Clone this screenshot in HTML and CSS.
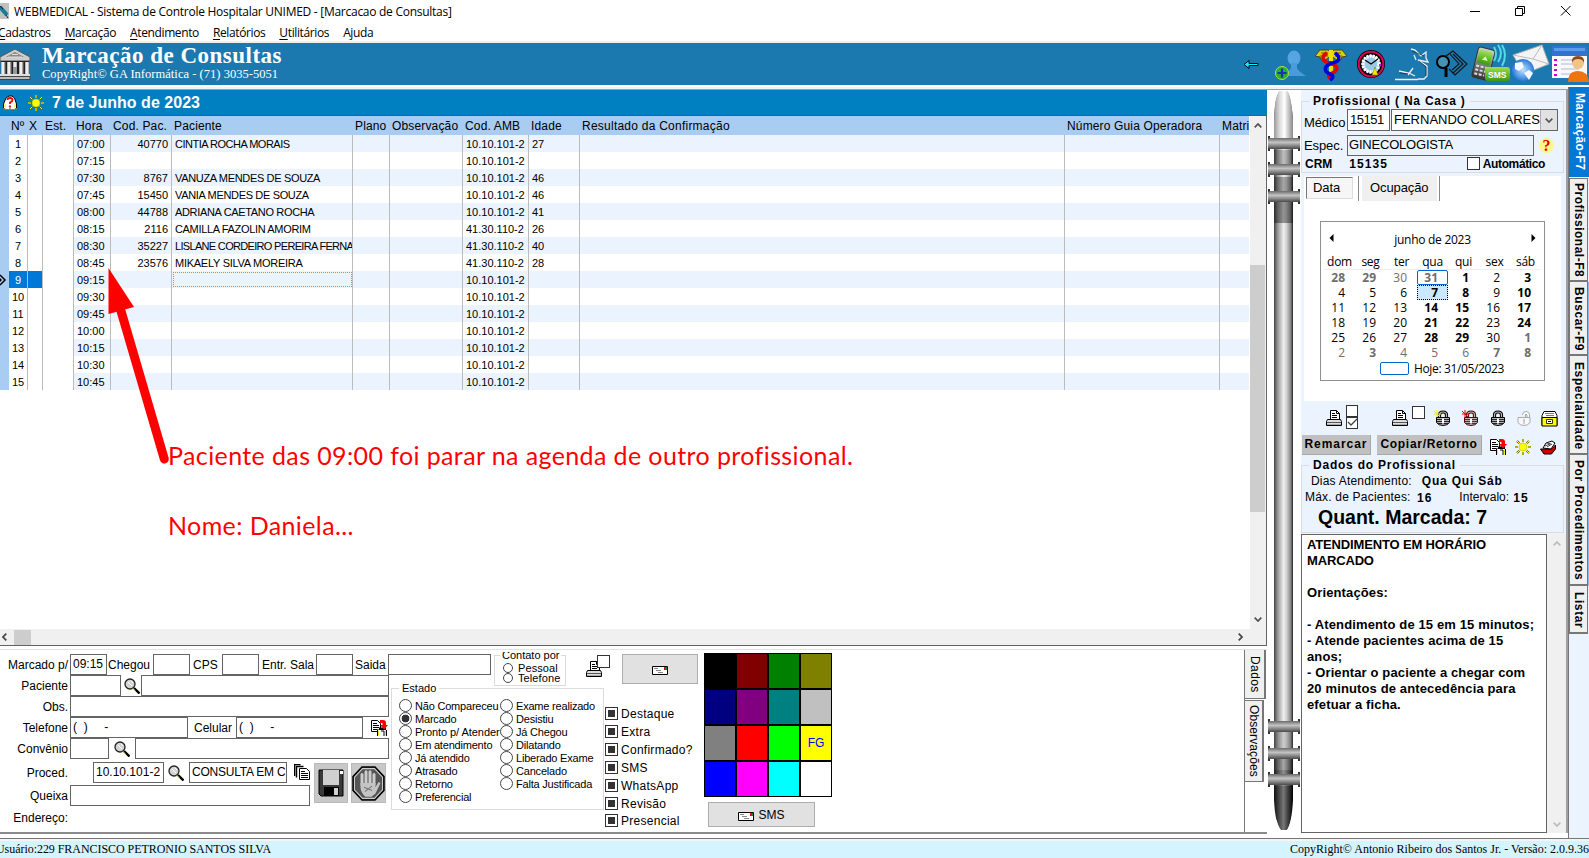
FILE: index.html
```html
<!DOCTYPE html>
<html lang="pt-BR">
<head>
<meta charset="utf-8">
<title>WEBMEDICAL</title>
<link rel="stylesheet" href="styles.css">
</head>
<body>
<svg width="0" height="0" class="defs" aria-hidden="true">
<defs>
<linearGradient id="tube"><stop offset="0" stop-color="#444"/><stop offset=".2" stop-color="#999"/><stop offset=".5" stop-color="#eee"/><stop offset=".65" stop-color="#d4d4d4"/><stop offset=".88" stop-color="#888"/><stop offset="1" stop-color="#222"/></linearGradient>
<linearGradient id="tubeTop"><stop offset="0" stop-color="#999"/><stop offset=".3" stop-color="#ddd"/><stop offset=".55" stop-color="#fff"/><stop offset="1" stop-color="#888"/></linearGradient>
<linearGradient id="tubeDark"><stop offset="0" stop-color="#111"/><stop offset=".5" stop-color="#777"/><stop offset="1" stop-color="#000"/></linearGradient>
<linearGradient id="ringFill" x2="0" y2="1"><stop offset="0" stop-color="#6a6a6a"/><stop offset=".4" stop-color="#c4c4c4"/><stop offset="1" stop-color="#4a4a4a"/></linearGradient>
<linearGradient id="phone" x2="0" y2="1"><stop offset="0" stop-color="#c8d8c8"/><stop offset="1" stop-color="#333"/></linearGradient>
<linearGradient id="green" x2="0" y2="1"><stop offset="0" stop-color="#9ae04a"/><stop offset="1" stop-color="#3a9a10"/></linearGradient>
<radialGradient id="globeFill"><stop offset="0" stop-color="#bfe4ff"/><stop offset="1" stop-color="#2a7ad8"/></radialGradient>
<symbol id="ring" viewBox="0 0 34 16"><path d="M2 0v15M32 0v15" stroke="#333" stroke-width="2"/><rect x="1" y="2" width="32" height="11" rx="2" fill="url(#ringFill)"/></symbol>
<symbol id="printer" viewBox="0 0 16 18"><path d="M4.500 10.500V1.500h6l3 3v6" fill="#fff" stroke="#000"/><path d="M10.500 1.500v3h3M6 4.500h3M6 6.500h5M6 8.500h5" stroke="#000" fill="none"/><path d="M1.500 10.500h13l1 2v4h-15v-4z" fill="#ddd" stroke="#000"/><path d="M1 13.500h14" stroke="#555"/><path d="M1 15.500h14" stroke="#aaa"/></symbol>
<symbol id="lens" viewBox="0 0 16 16"><circle cx="6" cy="6" r="5" fill="#d4d4d4" stroke="#222" stroke-width="1.300"/><path d="M4 4l4 4M7 3l2 2" stroke="#fff"/><path d="M10 10l5.500 5.500" stroke="#000" stroke-width="2.400"/><path d="M9 10.500l2 2" stroke="#dd0"/></symbol>
<symbol id="docs" viewBox="0 0 17 17"><path d="M.5 1.500h6l3 3v8h-9z" fill="#fff" stroke="#000"/><path d="M2 4.500h4M2 6.500h6M2 8.500h6M2 10.500h6" stroke="#000"/><path d="M6.500 10.500h9v6h-9z" fill="#fff"/><path d="M6.500 11v6M15.500 11v6M10 12h3v5" stroke="#000" fill="none"/><path d="M7.500 11.500v5M14.500 11.500v5" stroke="#ee0"/><path d="M8 8.500h7v2.500H8z" fill="#000"/><path d="M9 1h3q3 0 3 3v2h2l-4 4.500L9 6h2.500V4H9z" fill="#f00"/></symbol>
<symbol id="lock" viewBox="0 0 14 16"><path d="M3.500 7V5Q3.500 2 7 2t3.500 3v2" fill="none" stroke="currentColor" stroke-width="3.200"/><path d="M3.500 8V5Q3.500 2 7 2t3.500 3v3" fill="none" stroke="#bbb" stroke-width="1.200"/><path d="M.500 7.500h13v5q-2 3-6.500 3t-6.500-3z" fill="#b4b4b4" stroke="currentColor"/><path d="M1 9.500h12M1 11.500h12M2 13.500h10" stroke="currentColor" opacity=".8"/><path d="M6 8.500h2v5H6z" fill="#fff"/></symbol>
<symbol id="sun" viewBox="0 0 16 16"><path d="M8 0v3M8 13v3M0 8h3M13 8h3M2 2l2.300 2.300M11.700 11.700L14 14M2 14l2.300-2.300M11.700 4.300L14 2" stroke="#660" stroke-width="2"/><path d="M8 0v3M8 13v3M0 8h3M13 8h3M2 2l2.300 2.300M11.700 11.700L14 14M2 14l2.300-2.300M11.700 4.300L14 2" stroke="#ff0"/><circle cx="8" cy="8" r="4" fill="#ff0" stroke="#aa0" stroke-width=".5"/></symbol>
<symbol id="mail" viewBox="0 0 16 9"><path d="M.5.500h15v8H.5z" fill="#fff" stroke="#000"/><path d="M2 2.500h4M4 4.500h5M6 6.500h5" stroke="#888"/><path d="M12 1h3v3h-3z" fill="#e00"/><path d="M13.500 1H15v3h-1.500z" fill="#090"/></symbol>
<symbol id="up" viewBox="0 0 8 5"><path d="M.7 4.300L4 1l3.300 3.300" fill="none" stroke="currentColor" stroke-width="1.700"/></symbol>
</defs>
</svg>
<div class="app">
<header class="titlebar">
  <svg class="appicon" width="9" height="16" viewBox="0 0 9 16"><path d="M0 0h9v16H0z" fill="#c0c0c0"/><path d="M0 4l7 8" stroke="#167d95" stroke-width="4"/><path d="M0 3l3 3M6 12l2 3" stroke="#123"/></svg>
  <span class="title">WEBMEDICAL - Sistema de Controle Hospitalar UNIMED - [Marcacao de Consultas]</span>
  <svg class="winbtns" width="105" height="12" viewBox="0 0 105 12"><path d="M0 6.500h10M45.500 3.500h7v7h-7zM47.500 3.500v-2h7v7h-2M91 1l9.500 9.500M100.500 1L91 10.500" fill="none" stroke="#000"/></svg>
</header>
<nav class="menu"><span class="m1"><u>C</u>adastros</span><span><u>M</u>arcação</span><span><u>A</u>tendimento</span><span><u>R</u>elatórios</span><span><u>U</u>tilitários</span><span>A<u>j</u>uda</span></nav>
<div class="banner">
  <svg class="temple" width="32" height="32" viewBox="0 0 32 32"><path d="M0 9L15 1l15 8v4H0z" fill="#ccc" stroke="#555"/><path d="M6 9l9-5 9 5z" fill="#888"/><path d="M8 9h14M12 6.500h6" stroke="#ddd"/><path d="M1 13h28v15H1z" fill="#222"/><path d="M3 14v13M9 14v13M15 14v5M21 14v13M27 14v13" stroke="#eee" stroke-width="3.500"/><path d="M5 14v13M11 14v13M23 14v13" stroke="#888"/><path d="M13 19h4v8h-4z" fill="#999"/><path d="M0 26h30v2H0z" fill="#ddd"/><path d="M-1 28.500h31v3H-1z" fill="#bbb" stroke="#444"/></svg>
  <div class="brand"><b>Marcação de Consultas</b><small>CopyRight© GA Informática - (71) 3035-5051</small></div>
  <svg class="tools" width="346" height="42" viewBox="1243 43 346 42">
    <path d="M1244 64.500l5-4v3h9v2h-9v3z" fill="#00f0ff" stroke="#000"/>
    <ellipse cx="1294" cy="58" rx="6.500" ry="7.500" fill="#55a5e2"/><path d="M1291 63h6v5q1 3 9 8h-25q8-4 10-8z" fill="#4a9bdb"/><circle cx="1282" cy="73" r="6.500" fill="#2aad35" stroke="#b0df40"/><path d="M1277.500 73h9M1282 68.500v9" stroke="#1835ae" stroke-width="2.200"/>
    <path d="M1315 56l5-6h8l3 2 3-2h8l5 6-5 1-1 3h-4l-6-4-6 4h-4l-1-3z" fill="#dcd000" stroke="#443"/><path d="M1321 53h7M1334 53h7M1320 56h8M1335 56h7" stroke="#665c00"/><path d="M1331 50v29" stroke="#eede00" stroke-width="4"/><path d="M1327 53c-7 4-4 9 3 10 9 3 9 7 1 11-4 2-2 4 1 5" fill="none" stroke="#e80000" stroke-width="3.800"/><path d="M1335 53c6 4 5 9-3 10-8 3-9 8-2 11 5 2 2 5 0 6" fill="none" stroke="#0000d8" stroke-width="3.600"/>
    <circle cx="1371" cy="64" r="11.500" fill="#d9ecf8" stroke="#000" stroke-width="5"/><circle cx="1371" cy="64" r="12.300" fill="none" stroke="#e00050" stroke-width="2"/><circle cx="1371" cy="64" r="8" fill="#9cc8e6" stroke="#fff" stroke-width="3.500" stroke-dasharray="2 1"/><path d="M1365 60l6 4 7-5" fill="none" stroke="#000" stroke-width="1.200"/><path d="M1375 67l3 8h-6z" fill="#ee0" stroke="#660" stroke-width=".5"/><path d="M1379 64h2v2h-2z" fill="#e0e"/>
    <path d="M1411 49l4 1 6 6 5-4v6l2 4-10-2 9 6v10l-3 3h-6M1395 79.500h23M1399 71l10 2 6 3M1408 75l5-7M1416 60l-2-5" fill="none" stroke="#eee" stroke-width="1.300"/><path d="M1412 51l12 5M1419 61l7 6v9M1400 73l8 1" fill="none" stroke="#222" stroke-width=".7"/>
    <circle cx="1443" cy="62" r="6" fill="#4592b7" stroke="#000" stroke-width="2"/><path d="M1446 68v9" stroke="#000" stroke-width="3"/><path d="M1446 56l7-5 14 13-12 11-6-6M1453 54l10 10-10 9M1450 54l9 10-7 6" fill="none" stroke="#111" stroke-width="1.100"/>
    <g transform="rotate(14 1483 63)"><rect x="1475" y="48" width="17" height="31" rx="3" fill="url(#phone)" stroke="#333"/><rect x="1477" y="51" width="13" height="13" rx="1" fill="url(#green)"/><path d="M1481 60l3-4 3 4z" fill="#dff5c0"/><path d="M1477 67h13M1477 71h13M1477 75h10" stroke="#ddd" stroke-width="2" stroke-dasharray="3 1.500"/></g><path d="M1494 47q4 7 0 14M1498 45q6 8 0 17M1502 45q6 10 0 21" stroke="#50dce6" stroke-width="2" fill="none"/><rect x="1485" y="67" width="25" height="14" rx="3" fill="url(#green)"/><text x="1488" y="77.500" class="smsico">SMS</text>
    <path d="M1513 55l29-10 7 19-25 10z" fill="#f4f4f4" stroke="#aaa"/><path d="M1513 55l20 4 9-14M1533 59l16 5" fill="none" stroke="#bbb"/><circle cx="1523" cy="70" r="11" fill="url(#globeFill)"/><path d="M1515 63l7-1 2 5-5 4-4-2zM1524 73l5-3 4 3-4 7z" fill="#f4faff"/>
    <path d="M1552 47h35v31h-35z" fill="#f8f8ff"/><path d="M1552 46h35v10h-35z" fill="#3273cf"/><path d="M1554 48h31v3h-31z" fill="#5b9be8"/><path d="M1561 60h20M1561 64h18M1561 69h18M1561 74h14" stroke="#ccd" stroke-width="1.500"/><path d="M1554 60h3M1554 65h3M1554 70h3M1554 75h3" stroke="#c0c" stroke-width="2"/><circle cx="1578" cy="63" r="6" fill="#f2c488"/><path d="M1572 63q-1-7 6-7t6 7q-1-4-6-4t-6 4z" fill="#8a4a12"/><path d="M1568 82q0-11 10-11t11 11z" fill="#ee7410"/>
  </svg>
</div>
<div class="body">
<main class="left">
  <section class="agenda">
    <div class="datebar">
      <svg width="16" height="16" viewBox="0 0 16 16"><path d="M1.500 13.500V9L4 3l3-2h3l2.500 2 2 6v4.500L11 15l-3-1-3 1z" fill="#fff" stroke="#000"/><path d="M1 13.500l4 1.500 3-1 3 1 4-1.500" stroke="#c90" fill="none"/><path d="M3 12V8.500M13 12V8.500" stroke="#ee0"/><path d="M5.500 5Q5.500 3 8 3t2.500 2Q10.500 6.500 8 7.500V9M8 10.500v2" fill="none" stroke="#e00" stroke-width="1.800"/></svg>
      <svg width="16" height="16"><use href="#sun"/></svg>
      <b>7 de Junho de 2023</b>
    </div>
    <div class="gridwrap">
      <div class="tablebox">
      <table class="grid">
      <colgroup><col class="c0"><col class="c1"><col class="c2"><col class="c3"><col class="c4"><col class="c5"><col class="c6"><col class="c7"><col class="c8"><col class="c9"><col class="c10"><col class="c11"><col class="c12"><col class="c13"></colgroup>
      <thead><tr><th></th><th class="n">Nº</th><th class="x">X</th><th class="e">Est.</th><th>Hora</th><th>Cod. Pac.</th><th>Paciente</th><th>Plano</th><th>Observação</th><th>Cod. AMB</th><th>Idade</th><th class="res">Resultado da Confirmação</th><th>Número Guia Operadora</th><th>Matri</th></tr></thead>
      <tbody>
      <tr><td></td><td>1</td><td></td><td></td><td>07:00</td><td>40770</td><td class="tight">CINTIA ROCHA MORAIS</td><td></td><td></td><td>10.10.101-2</td><td>27</td><td></td><td></td><td></td></tr>
      <tr><td></td><td>2</td><td></td><td></td><td>07:15</td><td></td><td></td><td></td><td></td><td>10.10.101-2</td><td></td><td></td><td></td><td></td></tr>
      <tr><td></td><td>3</td><td></td><td></td><td>07:30</td><td>8767</td><td>VANUZA MENDES DE SOUZA</td><td></td><td></td><td>10.10.101-2</td><td>46</td><td></td><td></td><td></td></tr>
      <tr><td></td><td>4</td><td></td><td></td><td>07:45</td><td>15450</td><td>VANIA MENDES DE SOUZA</td><td></td><td></td><td>10.10.101-2</td><td>46</td><td></td><td></td><td></td></tr>
      <tr><td></td><td>5</td><td></td><td></td><td>08:00</td><td>44788</td><td>ADRIANA CAETANO ROCHA</td><td></td><td></td><td>10.10.101-2</td><td>41</td><td></td><td></td><td></td></tr>
      <tr><td></td><td>6</td><td></td><td></td><td>08:15</td><td>2116</td><td>CAMILLA FAZOLIN AMORIM</td><td></td><td></td><td>41.30.110-2</td><td>26</td><td></td><td></td><td></td></tr>
      <tr><td></td><td>7</td><td></td><td></td><td>08:30</td><td>35227</td><td class="tighter">LISLANE CORDEIRO PEREIRA FERNA</td><td></td><td></td><td>41.30.110-2</td><td>40</td><td></td><td></td><td></td></tr>
      <tr><td></td><td>8</td><td></td><td></td><td>08:45</td><td>23576</td><td class="wide">MIKAELY SILVA MOREIRA</td><td></td><td></td><td>41.30.110-2</td><td>28</td><td></td><td></td><td></td></tr>
      <tr class="sel"><td><svg width="7" height="12" viewBox="0 0 7 12"><path d="M0 1l5 5-5 5" fill="none" stroke="#000" stroke-width="1.500"/><path d="M0 4l2 2-2 2z"/></svg></td><td>9</td><td></td><td></td><td>09:15</td><td></td><td></td><td></td><td></td><td>10.10.101-2</td><td></td><td></td><td></td><td></td></tr>
      <tr><td></td><td>10</td><td></td><td></td><td>09:30</td><td></td><td></td><td></td><td></td><td>10.10.101-2</td><td></td><td></td><td></td><td></td></tr>
      <tr><td></td><td>11</td><td></td><td></td><td>09:45</td><td></td><td></td><td></td><td></td><td>10.10.101-2</td><td></td><td></td><td></td><td></td></tr>
      <tr><td></td><td>12</td><td></td><td></td><td>10:00</td><td></td><td></td><td></td><td></td><td>10.10.101-2</td><td></td><td></td><td></td><td></td></tr>
      <tr><td></td><td>13</td><td></td><td></td><td>10:15</td><td></td><td></td><td></td><td></td><td>10.10.101-2</td><td></td><td></td><td></td><td></td></tr>
      <tr><td></td><td>14</td><td></td><td></td><td>10:30</td><td></td><td></td><td></td><td></td><td>10.10.101-2</td><td></td><td></td><td></td><td></td></tr>
      <tr><td></td><td>15</td><td></td><td></td><td>10:45</td><td></td><td></td><td></td><td></td><td>10.10.101-2</td><td></td><td></td><td></td><td></td></tr>
      </tbody></table>
      </div>
      <div class="vscroll"><svg width="8" height="5"><use href="#up"/></svg><i></i><svg width="8" height="5" class="down"><use href="#up"/></svg></div>
    </div>
    <div class="hscroll"><svg width="5" height="8" viewBox="0 0 5 8"><path d="M4.300.700L1 4l3.300 3.300" fill="none" stroke="#444" stroke-width="1.700"/></svg><i></i><svg class="hr" width="5" height="8" viewBox="0 0 5 8"><path d="M.7.700L4 4 .7 7.300" fill="none" stroke="#444" stroke-width="1.700"/></svg></div>
    <div class="note">
      <svg width="64" height="200" viewBox="106 264 64 200"><path d="M121 311L164.300 459" stroke="#f00" stroke-width="9" stroke-linecap="round"/><path d="M108.500 268l25.500 39-25.500 7z" fill="#f00"/></svg>
      <p class="p1">Paciente das 09:00 foi parar na agenda de outro profissional.</p>
      <p class="p2">Nome: Daniela...</p>
    </div>
  </section>
  <section class="formarea">
    <div class="form">
      <div class="fields">
        <div class="r r1"><label>Marcado p/</label><span class="in w37">09:15</span><span class="t44">Chegou</span><span class="in w37"></span><span class="t32">CPS</span><span class="in w37"></span><span class="t57">Entr. Sala</span><span class="in w37"></span><span class="t35">Saida</span><span class="in w103"></span></div>
        <div class="r"><label>Paciente</label><span class="in w51"></span><svg width="16" height="16" class="ml3"><use href="#lens"/></svg><span class="in w248"></span></div>
        <div class="r"><label>Obs.</label><span class="in w319"></span></div>
        <div class="r"><label>Telefone</label><span class="in w118">(&nbsp;&nbsp;)&nbsp;&nbsp;&nbsp;&nbsp; -</span><span class="t48">Celular</span><span class="in w127">(&nbsp;&nbsp;)&nbsp;&nbsp;&nbsp;&nbsp; -</span><svg width="17" height="17" class="ml8"><use href="#docs"/></svg></div>
        <div class="r"><label>Convênio</label><span class="in w39"></span><svg width="16" height="16" class="ml5"><use href="#lens"/></svg><span class="in w254"></span></div>
        <div class="r r6"><label>Proced.</label><span class="in w71">10.10.101-2</span><svg width="16" height="16" class="ml4"><use href="#lens"/></svg><span class="in w98">CONSULTA EM C</span><svg class="ml7" width="17" height="17" viewBox="0 0 17 17"><path d="M.500 12V.500h6M2.500 13.500V2.500h7" fill="none" stroke="#000" stroke-width="1.500"/><path d="M5.500 4.500h7l3 3v8h-10z" fill="#fff" stroke="#000"/><path d="M7 7.500h4M7 9.500h7M7 11.500h7M7 13.500h7" stroke="#000"/></svg></div>
        <div class="r r7"><label>Queixa</label><span class="in w240"></span></div>
        <div class="r r8"><label>Endereço:</label></div>
        <div class="bigbtns">
          <span class="bb"><svg width="26" height="28" viewBox="0 0 26 28"><path d="M1 1h24v26H3l-2-2z" fill="#3a3a3a" stroke="#000"/><path d="M5 1h16v15H5z" fill="#d0d0d0"/><path d="M22 2h3v3h-3z" fill="#fff"/><path d="M6 18h15v9H6z" fill="#000"/><path d="M16 19h4v7h-4z" fill="#d0d0d0"/></svg></span>
          <span class="bb b2"><svg width="33" height="35" viewBox="0 0 33 33" preserveAspectRatio="none"><path d="M10 1h13l9 9v13l-9 9H10l-9-9V10z" fill="#555" stroke="#000" stroke-width="1.500"/><path d="M10.500 2.500h12l8 8v12l-8 8h-12l-8-8v-12z" fill="none" stroke="#ccc"/><path d="M10 18V8M14 16V5.500M18 16V5.500M22 17V8" stroke="#ccc" stroke-width="3" stroke-linecap="round"/><path d="M8.500 16h15v4l3-5 2 1-5 10-4 3h-6q-5-4-5-9z" fill="#c4c4c4"/><path d="M12 20l8 3M13 24l7-5" stroke="#777"/></svg></span>
        </div>
      </div>
      <div class="mid">
        <div class="contato fs"><span class="cap">Contato por</span><p><i class="rd s"></i>Pessoal</p><p><i class="rd s"></i>Telefone</p></div>
        <div class="estado fs"><span class="cap">Estado</span>
          <div><p><i class="rd"></i>Não Compareceu</p><p><i class="rd on"></i>Marcado</p><p class="pa"><i class="rd"></i>Pronto p/ Atender</p><p><i class="rd"></i>Em atendimento</p><p><i class="rd"></i>Já atendido</p><p><i class="rd"></i>Atrasado</p><p><i class="rd"></i>Retorno</p><p><i class="rd"></i>Preferencial</p></div>
          <div><p><i class="rd"></i>Exame realizado</p><p><i class="rd"></i>Desistiu</p><p><i class="rd"></i>Já Chegou</p><p><i class="rd"></i>Dilatando</p><p><i class="rd"></i>Liberado Exame</p><p><i class="rd"></i>Cancelado</p><p><i class="rd"></i>Falta Justificada</p></div>
        </div>
      </div>
      <div class="opts">
        <div class="toprow"><span class="prn"><svg width="16" height="18"><use href="#printer"/></svg><i class="cb"></i></span><span class="btn mailb"><svg width="16" height="9"><use href="#mail"/></svg></span></div>
        <div class="checks"><p><i class="cb on"></i>Destaque</p><p><i class="cb on"></i>Extra</p><p><i class="cb on"></i>Confirmado?</p><p><i class="cb on"></i>SMS</p><p><i class="cb on"></i>WhatsApp</p><p><i class="cb on"></i>Revisão</p><p class="last"><i class="cb on"></i>Presencial</p></div>
      </div>
      <div class="colors">
        <div class="pal"><i class="k1"></i><i class="k2"></i><i class="k3"></i><i class="k4"></i><i class="k5"></i><i class="k6"></i><i class="k7"></i><i class="k8"></i><i class="k9"></i><i class="k10"></i><i class="k11"></i><i class="k12">FG</i><i class="k13"></i><i class="k14"></i><i class="k15"></i><i class="k16"></i></div>
        <span class="btn smsb"><svg width="16" height="9"><use href="#mail"/></svg>SMS</span>
      </div>
    </div>
    <div class="ftabs"><span class="f1">Dados</span><span class="f2">Observações</span></div>
  </section>
</main>
<div class="binder"><svg width="34" height="744" viewBox="0 0 34 744">
  <path d="M7 30Q8 4 13 1h7q4 4 6 29v700H7z" fill="url(#tube)"/><path d="M7 30Q8 4 13 1h7q4 4 6 29v18H7z" fill="url(#tubeTop)"/>
  <path d="M7 60h19v14H7z" opacity=".2"/><path d="M7 87h19v14H7z" opacity=".3"/><path d="M7 112h19v21H7z" opacity=".38"/>
  <path d="M7 640h19v20H7z" fill="#444" opacity=".2"/><path d="M7 660h19v20H7z" fill="url(#tubeDark)" opacity=".6"/><path d="M7 680h19v16H7z" fill="url(#tubeDark)" opacity=".8"/><path d="M7 696h19v14q-1 24-6 30h-6q-6-8-7-30z" fill="url(#tubeDark)"/><path d="M7 710q1 22 6 30H6zM26 710q-1 22-6 30h7z" fill="#fff"/>
  <use href="#ring" y="46" width="34" height="16"/><use href="#ring" y="72" width="34" height="16"/><use href="#ring" y="99" width="34" height="16"/><use href="#ring" y="629" width="34" height="16"/><use href="#ring" y="656" width="34" height="16"/><use href="#ring" y="682" width="34" height="16"/>
</svg></div>
<aside class="right">
  <div class="prof fs"><span class="cap">Profissional ( Na Casa )</span>
    <div class="pr"><label>Médico</label><span class="in med">15151</span><span class="in combo">FERNANDO COLLARES<i><svg width="8" height="5" class="down"><use href="#up"/></svg></i></span></div>
    <div class="pr pr2"><label>Espec.</label><span class="in esp">GINECOLOGISTA</span><span class="help">?</span></div>
    <div class="pr pr3"><b class="crm">CRM</b><b class="num">15135</b><i class="cb"></i><b class="auto">Automático</b></div>
  </div>
  <div class="calpanel">
    <div class="tabs"><span class="ta">Data</span><span class="tb">Ocupação</span></div>
    <div class="cal">
      <div class="caltitle"><svg width="5" height="8" viewBox="0 0 5 8"><path d="M4.500 0v8L.5 4z"/></svg><span>junho de 2023</span><svg width="5" height="8" viewBox="0 0 5 8"><path d="M.5 0v8l4-4z"/></svg></div>
      <div class="wk"><span>dom</span><span>seg</span><span>ter</span><span>qua</span><span>qui</span><span>sex</span><span>sáb</span></div>
      <div class="days"><b class="g">28</b><b class="g">29</b><s>30</s><b class="g td">31</b><b>1</b><span>2</span><b>3</b><span>4</span><span>5</span><span>6</span><b class="dsel">7</b><b>8</b><span>9</span><b>10</b><span>11</span><span>12</span><span>13</span><b>14</b><b>15</b><span>16</span><b>17</b><span>18</span><span>19</span><span>20</span><b>21</b><b>22</b><span>23</span><b>24</b><span>25</span><span>26</span><span>27</span><b>28</b><b>29</b><span>30</span><b class="g">1</b><s>2</s><b class="g">3</b><s>4</s><s>5</s><s>6</s><b class="g">7</b><b class="g">8</b></div>
      <div class="today"><i></i>Hoje: 31/05/2023</div>
    </div>
  </div>
  <div class="irow">
    <svg width="16" height="18"><use href="#printer"/></svg><span class="two"><i class="cb"></i><i class="cb chk"><svg width="11" height="9" viewBox="0 0 11 9"><path d="M1 4l3 3 6-6" fill="none" stroke="#444" stroke-width="1.300"/></svg></i></span>
    <svg class="i2" width="16" height="18"><use href="#printer"/></svg><i class="cb i3"></i>
    <svg class="i4" width="16" height="16" viewBox="-2 0 16 16"><use href="#lock" width="14" height="16"/><path d="M-2 1l6 6M1 0v7M-2 4h7" stroke="#ee0"/></svg>
    <svg class="i5" width="16" height="16" viewBox="-2 0 16 16"><use href="#lock" width="14" height="16" color="#500"/><path d="M-2 1l6 6M1 0v7M-2 4h7" stroke="#e00"/></svg>
    <svg class="i6" width="14" height="16"><use href="#lock"/></svg>
    <svg class="i7" width="14" height="16" viewBox="0 0 14 16"><path d="M8.500 7V5M5.500 5Q5.500 1.500 9 1.500T12.500 5v3H10V5Q9 3 8 5" fill="#fff" stroke="#aaa"/><path d="M1 7.500h12v5q-2 3-6 3t-6-3z" fill="#f8f8f8" stroke="#aaa"/><path d="M6 10h2M7 10v4" stroke="#aaa"/></svg>
    <svg class="i8" width="17" height="17" viewBox="0 0 17 17"><path d="M3 1.500h11l2 4v10H1v-10z" fill="#fff" stroke="#000"/><path d="M4 3.500h9M5 5.500h8" stroke="#777"/><path d="M1 7.500h15v8.500H1z" fill="#ff0" stroke="#000"/><path d="M5.500 9.500h6v4h-6z" fill="#fff" stroke="#000" stroke-width=".8"/><path d="M7 11.500h3" stroke="#000"/></svg>
  </div>
  <div class="brow"><span class="gb g1">Remarcar</span><span class="gb g2">Copiar/Retorno</span><svg class="j1" width="17" height="17"><use href="#docs"/></svg><svg class="j2" width="16" height="16"><use href="#sun"/></svg><svg class="j3" width="17" height="15" viewBox="0 0 17 15"><path d="M.500 9h11l4-4v4l-4 5H4z" fill="#d00000" stroke="#000"/><path d="M3 8l3-5 6-2 3 2-4 6z" fill="#fff" stroke="#000"/><path d="M5 6l5-2M7 7l5-3M7 3l4 1" stroke="#444"/></svg></div>
  <div class="dados fs"><span class="cap">Dados do Profissional</span>
    <div class="d1">Dias Atendimento:<b>Qua Qui Sáb</b></div>
    <div class="d2"><span>Máx. de Pacientes:</span><b>16</b><span class="itv">Intervalo:</span><b class="b15">15</b></div>
    <div class="d3">Quant. Marcada: 7</div>
  </div>
  <div class="memo"><div class="mtext"><span class="up">ATENDIMENTO EM HORÁRIO<br>MARCADO</span><br><br>Orientações:<br><br>- Atendimento de 15 em 15 minutos;<br>- Atende pacientes acima de 15<br>anos;<br>- Orientar o paciente a chegar com<br>20 minutos de antecedência para<br>efetuar a ficha.</div><div class="ms"><svg width="8" height="5"><use href="#up"/></svg><svg width="8" height="5" class="down"><use href="#up"/></svg></div></div>
</aside>
<div class="side"><span class="s1">Marcação-F7</span><span class="s2">Profissional-F8</span><span class="s3">Buscar-F9</span><span class="s4">Especialidade</span><span class="s5">Por Procedimentos</span><span class="s6">Listar</span></div>
</div>
<footer class="status"><span class="u">Usuário:229 FRANCISCO PETRONIO SANTOS SILVA</span><span class="c">CopyRight© Antonio Ribeiro dos Santos Jr. - Versão: 2.0.9.36</span></footer>
</div>
</body>
</html>
```

FILE: styles.css
```css
* { box-sizing: border-box; }
body { margin: 0; background: #fff; font: 12px "Liberation Sans", Arial, sans-serif; color: #000; }
p { margin: 0; }
i { font-style: normal; }
svg { flex: none; display: block; }
.defs { position: absolute; }
.app { width: 1589px; height: 858px; overflow: hidden; display: flex; flex-direction: column; white-space: nowrap; }
.down { transform: scaleY(-1); }

/* title and menu */
.titlebar { height: 23px; display: flex; align-items: center; font-family: "Open Sans", sans-serif; }
.appicon { margin-top: -1px; }
.title { margin-left: 5px; font-size: 12px; letter-spacing: -.27px; }
.winbtns { margin: -2px 14px 0 auto; }
.menu { height: 20px; display: flex; gap: 14px; font-family: "Open Sans", sans-serif; letter-spacing: -.38px; line-height: 20px; border-bottom: 2px solid #f0f0f0; margin-left: -1px; }
.m1 { margin-left: -1px; }
u { text-underline-offset: 2px; }
.banner { height: 42px; background: #1c79b0; display: flex; color: #fff; font-family: "Liberation Serif", serif; }
.temple { margin-top: 5px; }
.brand { margin-left: 10px; display: flex; flex-direction: column; }
.brand b { font-size: 23px; line-height: 25px; letter-spacing: .5px; }
.brand small { font-size: 12.500px; line-height: 12px; letter-spacing: .03px; }
.tools { margin-left: auto; }
.smsico { font: bold 8.500px "Liberation Sans"; fill: #fff; }

/* body */
.body { height: 753px; display: flex; background: linear-gradient(#fff 0 2px, #f0f3f8 2px 4px, #a0a0a0 4px 5px, #fff 5px); }
.left { width: 1267px; padding-top: 5px; display: flex; flex-direction: column; }
.agenda { position: relative; height: 556px; border-bottom: 1px solid #646464; }
.datebar { height: 26px; background: #0080c0; border-bottom: 1px solid #555; color: #fff; display: flex; align-items: center; padding-left: 2px; gap: 10px; }
.datebar b { font-size: 16px; margin-left: -2px; letter-spacing: .02px; }
.gridwrap { height: 513px; display: flex; }
.tablebox { width: 1249px; overflow: hidden; }
.grid { table-layout: fixed; border-collapse: separate; border-spacing: 0; width: 1280px; }
.c0 { width: 9px; } .c1 { width: 19px; } .c2 { width: 15px; } .c3 { width: 31px; } .c4 { width: 37px; } .c5 { width: 61px; } .c6 { width: 181px; } .c7 { width: 37px; } .c8 { width: 73px; } .c9 { width: 66px; } .c10 { width: 51px; } .c11 { width: 485px; } .c12 { width: 155px; } .c13 { width: 60px; }
.grid th { height: 19px; padding: 0 0 0 2px; background: #a8ccf2; font-weight: normal; text-align: left; letter-spacing: .15px; }
.grid th.x { padding-left: 1px; }
.grid th.res { letter-spacing: .24px; }
.grid td { height: 17px; padding: 0 3px 0 3px; font-size: 11px; line-height: 16px; border-right: 1px solid #bcbcbc; overflow: hidden; }
.grid tbody tr:nth-child(odd) td { background: #ebf3fe; }
.grid tbody tr td:nth-child(1) { background: #a8ccf2; border: 0; padding: 0; }
.grid tbody tr td:nth-child(n+2):nth-child(-n+4) { background: #fff; }
.grid td:nth-child(2) { text-align: center; padding: 0; }
.grid td:nth-child(6) { text-align: right; }
.grid td:nth-child(7) { letter-spacing: -.34px; padding-right: 0; }
.grid td.tight { letter-spacing: -.5px; }
.grid td.tighter { letter-spacing: -.68px; }
.grid td.wide { letter-spacing: -.26px; }
.grid tbody tr.sel td:nth-child(2), .grid tbody tr.sel td:nth-child(3) { background: #0078d7; color: #fff; }
.grid tr.sel td:nth-child(7) { outline: 1px dotted #e08a20; outline-offset: -2px; }
.vscroll { width: 18px; background: #f0f0f0; border-left: 1px solid #fff; border-right: 1px solid #646464; display: flex; flex-direction: column; align-items: center; padding: 7px 1px 7px 0; color: #505050; }
.vscroll i { width: 15px; height: 247px; background: #cdcdcd; margin-top: 137px; }
.vscroll .down { margin-top: auto; }
.hscroll { height: 16px; background: #f0f0f0; display: flex; align-items: center; padding: 0 23px 0 2px; border-right: 1px solid #646464; }
.hscroll i { width: 17px; height: 15px; background: #cdcdcd; margin-left: 7px; }
.hr { margin-left: auto; }
.note { position: absolute; left: 106px; top: 174px; color: #f00; font: 25px Lato, sans-serif; }
.note p { position: absolute; left: 62px; letter-spacing: .39px; }
.note .p1 { top: 176px; }
.note .p2 { top: 246px; }

/* appointment form */
.formarea { display: flex; margin-top: 3px; height: 185px; border-top: 1px solid #e3e3e3; border-bottom: 2px solid #8a8a8a; }
.form { width: 1245px; border-right: 1px solid #777; display: flex; }
.fields { width: 391px; padding-top: 4px; position: relative; }
.r { display: flex; align-items: center; height: 21px; }
.r1 { width: 495px; }
.r6 { margin-top: 3px; } .r7 { margin-top: 2px; } .r8 { margin-top: 1px; }
.r label { width: 70px; padding-right: 2px; text-align: right; }
.in { height: 21px; border: 1px solid #646464; background: #fff; line-height: 18px; padding-left: 2px; overflow: hidden; flex: none; }
.w37 { width: 37px; } .w103 { width: 103px; } .w51 { width: 51px; } .w248 { width: 248px; margin-left: 1px; } .w319 { width: 319px; } .w118 { width: 118px; } .w127 { width: 127px; } .w39 { width: 39px; } .w254 { width: 254px; margin-left: 5px; } .w71 { width: 71px; margin-left: 23px; } .w98 { width: 98px; margin-left: 5px; letter-spacing: -.22px; } .w240 { width: 240px; }
.t44 { width: 46px; padding-left: 1px; } .t32 { width: 32px; padding-left: 3px; } .t57 { width: 57px; padding-left: 3px; } .t35 { width: 35px; padding-left: 2px; } .t48 { width: 48px; padding-left: 6px; }
.ml3 { margin-left: 3px; } .ml8 { margin-left: 8px; } .ml5 { margin-left: 5px; } .ml4 { margin-left: 4px; } .ml7 { margin-left: 7px; }
.bigbtns { position: absolute; left: 314px; top: 113px; display: flex; gap: 3px; }
.bb { width: 34px; height: 40px; background: #c8c8c8; border: 1px solid #bababa; display: flex; align-items: center; justify-content: center; }
.bb.b2 { width: 35px; }
.fs { position: relative; border: 1px solid #dcdcdc; }
.cap { position: absolute; background: #fff; }
.mid { width: 213px; font-size: 11px; }
.mid p { height: 13px; display: flex; align-items: center; letter-spacing: -.2px; }
.mid p.pa { letter-spacing: -.06px; }
.contato { width: 72px; height: 31px; margin: 5px 0 0 103px; padding: 7px 0 0 8px; }
.contato .cap { left: 5px; top: -7px; padding: 0 2px; line-height: 13px; letter-spacing: 0; clip-path: inset(3px 0 0 0); }
.mid .contato p { height: 10px; letter-spacing: .1px; gap: 5px; }
.estado { height: 122px; margin-top: 2px; display: flex; padding: 10px 0 0 7px; }
.estado .cap { left: 7px; top: -7px; padding: 0 3px; }
.estado > div { width: 101px; }
.estado p { gap: 3px; }
.rd { width: 13px; height: 13px; flex: none; border: 1px solid #444; border-radius: 50%; background: #fff; }
.rd.s { width: 10px; height: 10px; }
.rd.on { background: radial-gradient(circle, #333 3.600px, #fff 4.200px); }
.opts { width: 100px; }
.toprow { display: flex; width: 100px; padding-top: 4px; }
.prn { position: relative; margin: 6px 0 0 -18px; width: 36px; height: 24px; }
.cb { display: block; width: 13px; height: 13px; border: 1px solid #333; background: #fff; flex: none; }
.cb.on { background: #333; border: 1px solid #333; box-shadow: inset 0 0 0 2px #fff; }
.prn .cb { position: absolute; left: 11px; top: -5px; }
.btn { background: #e1e1e1; border: 1px solid #adadad; display: flex; align-items: center; justify-content: center; flex: none; }
.mailb { width: 76px; height: 30px; }
.mailb svg { margin-top: 2px; }
.checks { padding: 20px 0 0 1px; }
.checks p { height: 18px; display: flex; align-items: center; gap: 3px; letter-spacing: .27px; padding-top: 1px; }
.checks .last { height: 17px; padding-top: 0; }
.colors { padding-top: 3px; }
.pal { width: 128px; height: 144px; background: #000; display: grid; grid-template-columns: repeat(4, 30px); grid-template-rows: repeat(4, 34px); gap: 2px; padding: 1px; }
.k1 { background: #000; } .k2 { background: #800000; } .k3 { background: #008000; } .k4 { background: #808000; } .k5 { background: #000080; } .k6 { background: #800080; } .k7 { background: #008080; } .k8 { background: #c0c0c0; } .k9 { background: #808080; } .k10 { background: #f00; } .k11 { background: #0f0; } .k12 { background: #ff0; color: #00f; text-align: center; line-height: 34px; } .k13 { background: #00f; } .k14 { background: #f0f; } .k15 { background: #0ff; } .k16 { background: #fff; }
.smsb { width: 107px; height: 25px; margin: 5px 0 0 4px; gap: 4px; }
.smsb svg { margin: 3px 0 0 0; }
.ftabs { width: 22px; }
.ftabs span { display: flex; align-items: center; justify-content: center; writing-mode: vertical-rl; background: #f0f0f0; border: solid #777; border-width: 0 2px 1px 0; letter-spacing: .4px; }
.f1 { width: 21px; height: 49px; }
.ftabs .f2 { width: 19px; height: 82px; margin-top: 1px; border-top-width: 1px; letter-spacing: .1px; }

/* ring binder */
.binder { width: 34px; padding-top: 5px; }

/* professional panel */
.right { width: 267px; margin-top: 5px; height: 743px; background: #ebf3fe; border-right: 2px solid #a0a0a0; }
.right .cap { background: #ebf3fe; }
.prof { height: 72px; width: 263px; margin-top: 11px; padding-top: 7px; }
.right .fs .cap { font-weight: bold; letter-spacing: .77px; left: 7px; top: -9px; padding: 0 4px; line-height: 16px; }
.pr { display: flex; align-items: center; height: 22px; font-size: 13px; padding-left: 2px; }
.pr label { width: 43px; padding-top: 4px; letter-spacing: -.1px; }
.pr .in { height: 22px; line-height: 19px; }
.med { width: 43px; letter-spacing: -.5px; }
.combo { width: 167px; margin-left: 1px; display: flex; font-size: 13px; }
.combo i { width: 18px; height: 20px; margin-left: auto; background: #e1e1e1; border-left: 1px solid #adadad; display: flex; align-items: center; justify-content: center; color: #555; }
.pr2 { margin-top: 4px; }
.pr2 label { padding-top: 0; margin-top: -2px; }
.pr .esp { width: 187px; background: #ebf3fe; letter-spacing: -.2px; line-height: 18px; }
.pr .esp { padding-left: 1px; height: 21px; margin-top: -1px; }
.help { width: 15px; height: 15px; margin: -2px 0 0 5px; background: #fff68a; border-radius: 50%; color: #e00000; font: bold 16px/15px "Liberation Serif"; text-align: center; }
.pr3 { font-size: 12px; height: 17px; padding-left: 3px; }
.pr3 b { margin-top: -4px; }
.pr3 .cb { margin: -4px 0 0 auto; }
.pr3 .num { margin: -3px 0 0 17px; letter-spacing: 1.050px; }
.pr3 .auto { margin: -3px 18px 0 3px; letter-spacing: -.38px; }
.calpanel { margin: 3px 0 0 3px; width: 257px; height: 225px; background: #fff; }
.tabs { display: flex; font-size: 13px; letter-spacing: -.1px; }
.ta { width: 47px; height: 22px; margin: 1px 5px 0 2px; border: 1px solid #888; border-color: #777 #ddd #ddd #777; background: #f6f6f6; padding-left: 6px; line-height: 20px; }
.tb { height: 25px; border: 1px solid #888; border-width: 0 1px; width: 82px; line-height: 23px; padding-left: 11px; background: linear-gradient(#f0f0f0, #f0f0f0) 3px 0/75px 25px no-repeat; }
.cal { width: 225px; height: 160px; margin: 20px 0 0 16px; border: 1px solid #909090; padding: 8px 8px 0 8px; font-family: "Open Sans", sans-serif; letter-spacing: -.28px; }
.caltitle { display: flex; justify-content: space-between; align-items: center; height: 18px; }
.caltitle svg { margin-top: -2px; }
.wk, .days { display: grid; grid-template-columns: repeat(7, 31px); margin-left: -5px; }
.wk { height: 20px; line-height: 24px; margin-top: 2px; border-bottom: 1px solid #eee; text-align: center; width: 217px; }
.days { grid-auto-rows: 15px; line-height: 15px; text-align: right; }
.days > * { padding-right: 10px; text-decoration: none; }
.days { letter-spacing: 0; }
.days s, .days .g { color: #6d6d6d; }
.td { outline: 1px solid #0066cc; outline-offset: -1px; border-radius: 2px; }
.dsel { background: #cce8ff; outline: 1px dotted #000; outline-offset: -1px; }
.today { display: flex; align-items: center; height: 17px; gap: 5px; padding-left: 51px; letter-spacing: -.36px; }
.today i { width: 29px; height: 13px; border: 1px solid #0066cc; border-radius: 2px; }
.irow { height: 32px; display: flex; padding: 8px 0 0 25px; }
.two { margin: -4px 0 0 4px; }
.two .cb { height: 12px; width: 12px; }
.i2 { margin-left: 34px; } .i3 { margin: -3px 0 0 4px; }
.i4, .i5, .i6, .i7, .i8 { margin-top: 1px; }
.i4 { margin-left: 9px; } .i5 { margin-left: 12px; } .i6 { margin-left: 13px; } .i7 { margin-left: 12px; } .i8 { margin-left: 10px; }
.brow { display: flex; height: 23px; padding: 2px 0 0 1px; }
.gb { background: #c0c0c0; border: solid #a8a8a8; border-width: 0 1px 1px 0; height: 20px; line-height: 19px; font-weight: bold; text-align: center; letter-spacing: .95px; }
.g1 { width: 69px; } .g2 { width: 105px; margin-left: 6px; letter-spacing: .7px; }
.j1 { margin: 3px 0 0 8px; } .j2 { margin: 4px 0 0 8px; } .j3 { margin: 5px 0 0 9px; }
.dados { width: 263px; height: 68px; margin-top: 9px; padding-top: 6px; }
.d1, .d2 { display: flex; height: 17px; align-items: center; }
.d1 { padding-left: 9px; letter-spacing: .2px; }
.d1 b { margin-left: 10px; letter-spacing: .8px; }
.d2 { padding-left: 3px; letter-spacing: .15px; margin-top: -1px; }
.d2 b { letter-spacing: 1px; padding-top: 2px; }
.d2 .itv { margin-left: 27px; letter-spacing: .05px; }
.d2 b.b15 { margin-left: 4px; }
.d2 span:first-child { width: 112px; letter-spacing: .2px; }
.d3 { font: bold 19.500px/25px "Liberation Sans"; padding-left: 16px; }
.memo { display: flex; height: 299px; margin-top: 1px; }
.mtext { width: 246px; border: 1px solid #646464; background: #fff; padding: 2px 5px; font: bold 13px/16px "Liberation Sans"; letter-spacing: .13px; }
.up { letter-spacing: -.15px; }
.ms { flex: 1; background: #f0f0f0; display: flex; flex-direction: column; justify-content: space-between; align-items: center; padding: 7px 0 6px; color: #bbb; }

/* side tabs */
.side { width: 21px; margin-top: 2px; height: 751px; background: #ebf3fe; border-left: 1px solid #777; font-weight: bold; }
.side span { display: flex; align-items: center; justify-content: center; writing-mode: vertical-rl; width: 19px; background: #f0f0f0; border: solid #777; border-width: 0 1px 2px 1px; letter-spacing: .6px; padding-top: 2px; }
.side .s1 { width: 21px; height: 90px; background: #0078d7; color: #fff; border: 0; letter-spacing: .35px; margin-bottom: 1px; padding: 0; }
.side .s2 { height: 104px; border-top-width: 1px; letter-spacing: .5px; } .side .s3 { height: 74px; } .side .s4 { height: 99px; } .side .s5 { height: 131px; } .side .s6 { height: 48px; }
.s3, .s4, .s5 { box-shadow: 2px 0 #8cb8ea; }

/* status bar */
.status { height: 20px; border-top: 1px solid #777; background: linear-gradient(#f4f4f4 0 2px, #d4f4ff 2px); display: flex; justify-content: space-between; font: 12px/19px "Liberation Serif"; padding-top: 1px; }
.u { margin-left: -4px; letter-spacing: -.05px; }
```
